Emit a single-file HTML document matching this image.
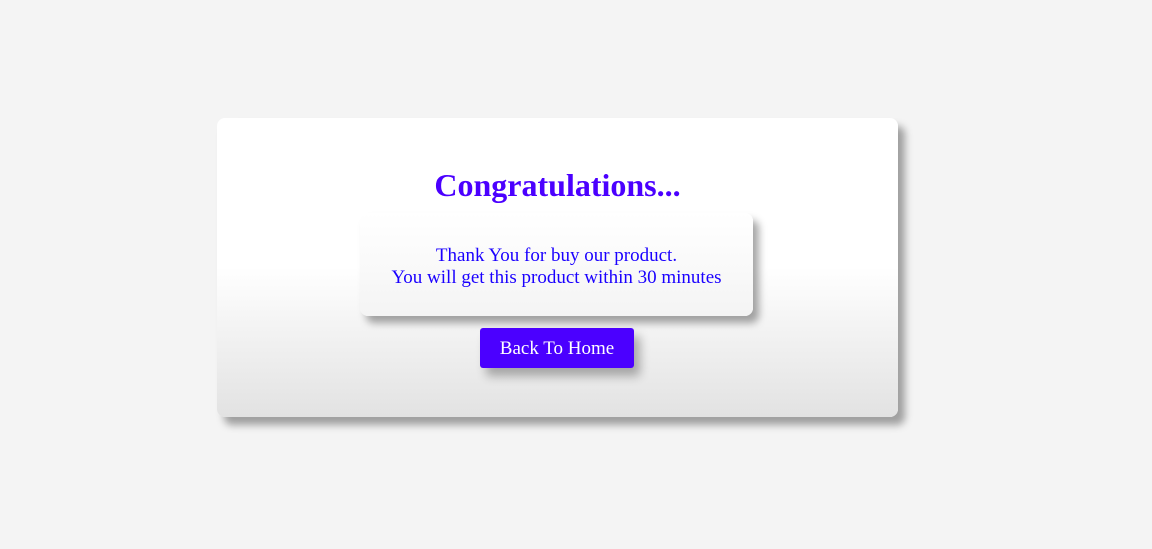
<!DOCTYPE html>
<html><head><style>
html,body{margin:0;padding:0;}
body{width:1152px;height:549px;background:#f4f4f4;position:relative;font-family:"Liberation Serif",serif;overflow:hidden;}
.card{position:absolute;left:217px;top:118px;width:681px;height:299px;border-radius:8px;
background:linear-gradient(to bottom,#fff 0%,#fff 50%,#e2e2e2 100%);box-shadow:7px 8px 8px rgba(0,0,0,0.35);}
h1{position:absolute;left:217px;width:681px;top:166px;margin:0;text-align:center;font-size:32px;font-weight:bold;color:#4b00ff;line-height:38px;}
.box{position:absolute;left:360px;top:213px;width:393px;height:103px;border-radius:8px;
background:linear-gradient(to bottom,#fff,#f4f4f4);box-shadow:6px 7px 8px rgba(0,0,0,0.35);
text-align:center;color:#1a00ff;font-size:19px;line-height:22px;box-sizing:border-box;padding-top:32px;}
.btn{position:absolute;left:480px;top:328px;width:154px;height:40px;border-radius:3px;background:#4b00ff;
color:#fff;font-size:19px;line-height:42px;text-align:center;box-shadow:6px 8px 10px rgba(0,0,0,0.3);}
</style></head><body>
<div class="card"></div>
<h1>Congratulations...</h1>
<div class="box">Thank You for buy our product.<br>You will get this product within 30 minutes</div>
<div class="btn">Back To Home</div>
</body></html>
